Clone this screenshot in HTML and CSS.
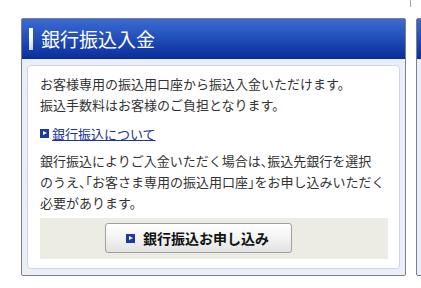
FILE: index.html
```html
<!DOCTYPE html>
<html lang="ja">
<head>
    <meta charset="UTF-8">
    <title>銀行振込入金</title>
    <link rel="stylesheet" href="styles.css">
</head>
<body>
<div class="topbar"><div class="tick"></div></div>
<div class="row">
    <div class="panel">
        <h2 class="panel-head"><span class="bar"></span>銀行振込入金</h2>
        <div class="panel-body">
            <div class="box">
                <p class="lead">お客様専用の振込用口座から振込入金いただけます。<br>振込手数料はお客様のご負担となります。</p>
                <p class="link-line"><span class="arrow"></span><a href="#">銀行振込について</a></p>
                <p class="note">銀行振込によりご入金いただく場合は、振込先銀行を選択<br>のうえ、「お客さま専用の振込用口座」をお申し込みいただく<br>必要があります。</p>
                <div class="action">
                    <button class="btn"><span class="arrow"></span>銀行振込お申し込み</button>
                </div>
            </div>
        </div>
    </div>
    <div class="panel side">
        <h2 class="panel-head"></h2>
        <div class="panel-body">
            <div class="box side-box"></div>
        </div>
    </div>
</div>
</body>
</html>
```

FILE: styles.css
```css
body {
    margin: 0;
    font-family: "Noto Sans CJK JP", "Noto Sans", sans-serif;
    font-size: 13px;
    color: #333;
    background: #fff;
    overflow: hidden;
}
.topbar {
    height: 18px;
}
.tick {
    margin-left: 410px;
    width: 1px;
    height: 7px;
    background: #a8a8a8;
}
.row {
    display: flex;
    gap: 10px;
    padding-left: 21px;
    overflow: hidden;
}
.panel {
    flex: none;
    width: 383px;
    border: 1px solid #808080;
    border-radius: 2px;
    background: #e9eef8;
}
.panel-head {
    display: flex;
    align-items: center;
    gap: 8px;
    height: 39px;
    margin: 0;
    padding-left: 7px;
    background: linear-gradient(#3b6bd3, #0a2f9c);
    border-bottom: 1px solid #0b2b88;
    color: #fff;
    font-size: 19px;
    font-weight: normal;
}
.bar {
    width: 4px;
    height: 22px;
    background: linear-gradient(#fff 40%, #c9d4f0);
}
.panel-body {
    padding: 6px 5px 6px 5px;
}
.box {
    background: #fff;
    border: 1px solid #cfd6e2;
    border-radius: 4px;
    padding: 7px 11px 9px 12px;
    line-height: 21px;
}
.box p {
    margin: 0;
}
.link-line {
    margin-top: 8px !important;
    display: flex;
    align-items: center;
    gap: 3px;
}
.link-line a {
    color: #1b3495;
}
.arrow {
    position: relative;
    display: inline-block;
    width: 9px;
    height: 9px;
    background: #1d3a9e;
}
.arrow::after {
    content: "";
    position: absolute;
    left: 3px;
    top: 2px;
    border-left: 4px solid #fff;
    border-top: 2.5px solid transparent;
    border-bottom: 2.5px solid transparent;
}
.note {
    margin-top: 6px !important;
    white-space: nowrap;
    font-feature-settings: "halt";
}
.action {
    margin-top: 5px;
    background: #ecece4;
    padding: 5px 0 6px 65px;
}
.btn {
    display: flex;
    align-items: center;
    gap: 8px;
    width: 187px;
    height: 30px;
    padding: 0 0 0 20px;
    border: 1px solid #a0a0a0;
    border-radius: 3px;
    background: linear-gradient(#fff, #f3f3f3 50%, #e2e2e2);
    font-family: "Noto Sans CJK JP", "Noto Sans", sans-serif;
    font-size: 14px;
    font-weight: bold;
    color: #111;
}
.side .panel-head {
    padding: 0;
}
.side-box {
    height: 130px;
}
```
